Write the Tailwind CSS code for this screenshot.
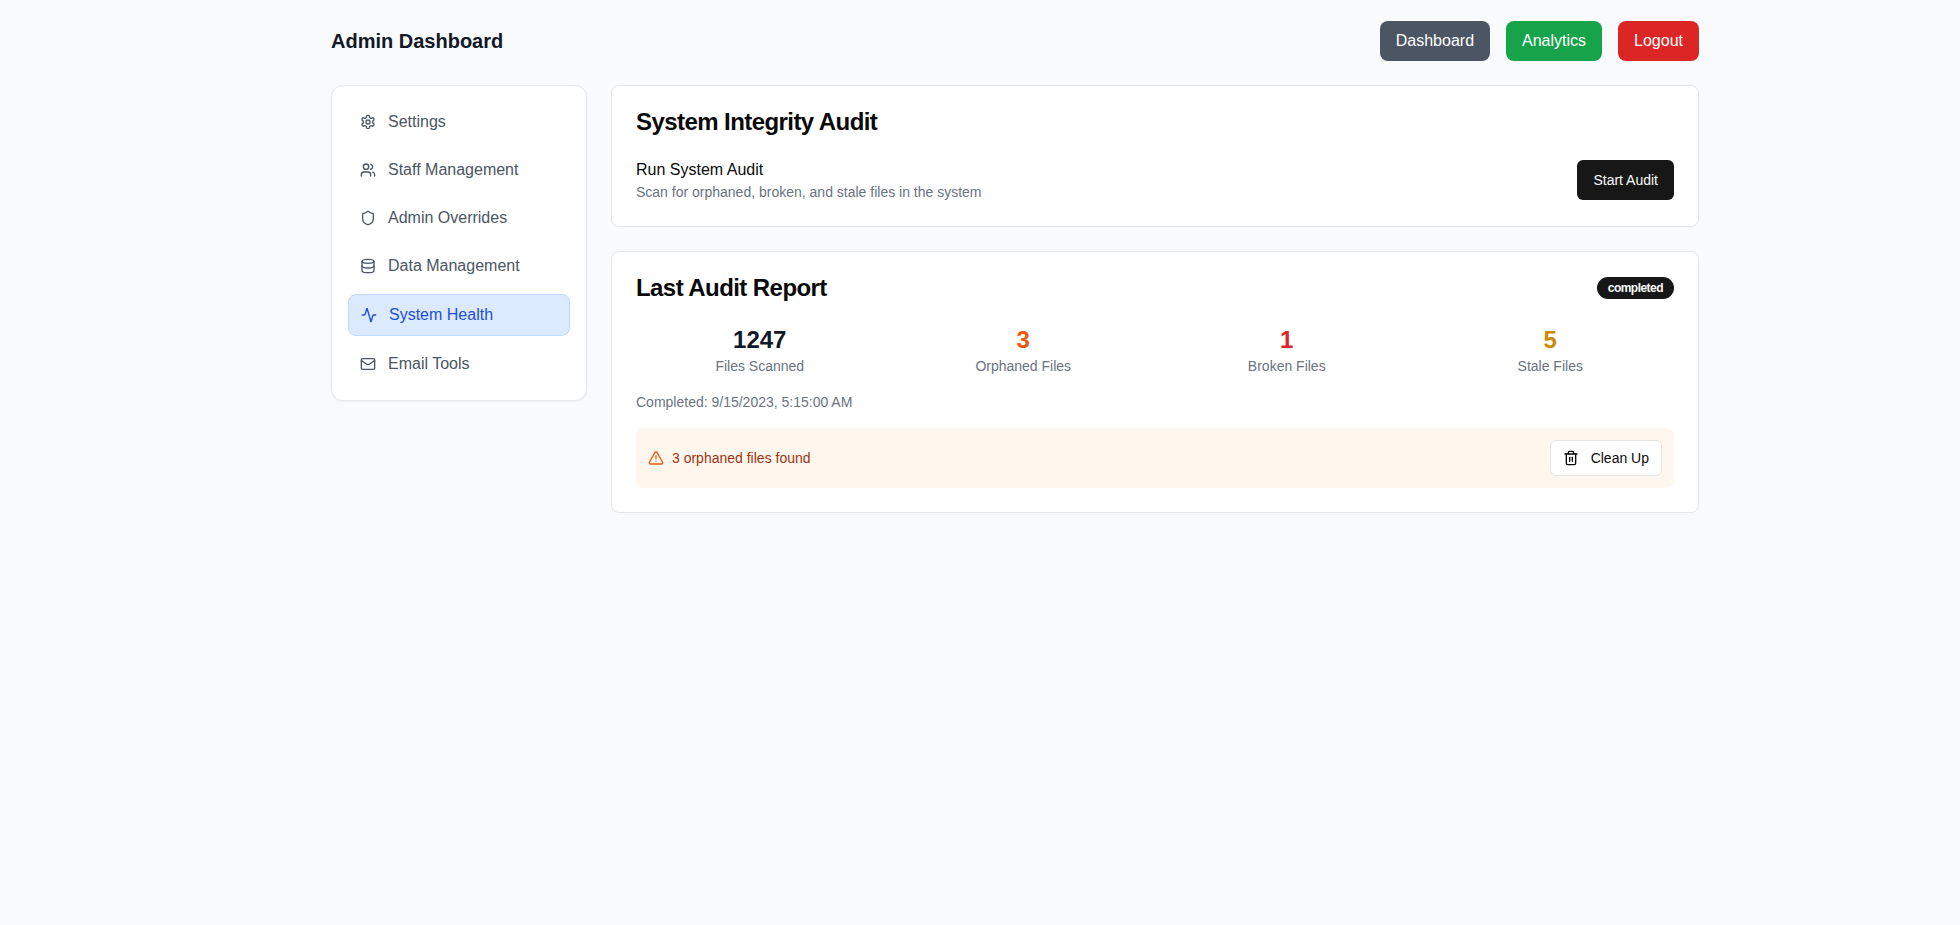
<!DOCTYPE html>
<html lang="en">
<head>
<meta charset="utf-8">
<title>Admin Dashboard</title>
<script src="https://cdn.jsdelivr.net/npm/@tailwindcss/browser@4"></script>
</head>
<body class="min-h-screen bg-[#f9fafb] font-['Liberation_Sans',Arial,sans-serif] text-[#0a0a0a]">
<div class="ml-[331px] w-[1368px] pt-[21px]">
  <header class="flex h-10 items-center justify-between">
    <h1 class="text-xl font-bold text-[#111827]">Admin Dashboard</h1>
    <nav class="flex gap-4 text-white">
      <button class="rounded-lg bg-[#4b5563] px-4 py-2">Dashboard</button>
      <button class="rounded-lg bg-[#16a34a] px-4 py-2">Analytics</button>
      <button class="rounded-lg bg-[#dc2626] px-4 py-2">Logout</button>
    </nav>
  </header>
  <div class="mt-6 flex items-start gap-6">
    <aside class="w-64 shrink-0 rounded-xl border border-[#e5e7eb] bg-white p-4 shadow-xs">
      <ul class="flex flex-col gap-2 text-[#4b5563]">
        <li class="flex items-center gap-3 rounded-lg px-3 py-2">
          <svg class="size-4" viewBox="0 0 24 24" fill="none" stroke="currentColor" stroke-width="2" stroke-linecap="round" stroke-linejoin="round"><path d="M12.22 2h-.44a2 2 0 0 0-2 2v.18a2 2 0 0 1-1 1.73l-.43.25a2 2 0 0 1-2 0l-.15-.08a2 2 0 0 0-2.73.73l-.22.38a2 2 0 0 0 .73 2.73l.15.1a2 2 0 0 1 1 1.72v.51a2 2 0 0 1-1 1.74l-.15.09a2 2 0 0 0-.73 2.73l.22.38a2 2 0 0 0 2.73.73l.15-.08a2 2 0 0 1 2 0l.43.25a2 2 0 0 1 1 1.73V20a2 2 0 0 0 2 2h.44a2 2 0 0 0 2-2v-.18a2 2 0 0 1 1-1.73l.43-.25a2 2 0 0 1 2 0l.15.08a2 2 0 0 0 2.73-.73l.22-.39a2 2 0 0 0-.73-2.73l-.15-.08a2 2 0 0 1-1-1.74v-.5a2 2 0 0 1 1-1.74l.15-.09a2 2 0 0 0 .73-2.73l-.22-.38a2 2 0 0 0-2.73-.73l-.15.08a2 2 0 0 1-2 0l-.43-.25a2 2 0 0 1-1-1.73V4a2 2 0 0 0-2-2z"/><circle cx="12" cy="12" r="3"/></svg>
          <span>Settings</span>
        </li>
        <li class="flex items-center gap-3 rounded-lg px-3 py-2">
          <svg class="size-4" viewBox="0 0 24 24" fill="none" stroke="currentColor" stroke-width="2" stroke-linecap="round" stroke-linejoin="round"><path d="M16 21v-2a4 4 0 0 0-4-4H6a4 4 0 0 0-4 4v2"/><circle cx="9" cy="7" r="4"/><path d="M22 21v-2a4 4 0 0 0-3-3.87"/><path d="M16 3.13a4 4 0 0 1 0 7.75"/></svg>
          <span>Staff Management</span>
        </li>
        <li class="flex items-center gap-3 rounded-lg px-3 py-2">
          <svg class="size-4" viewBox="0 0 24 24" fill="none" stroke="currentColor" stroke-width="2" stroke-linecap="round" stroke-linejoin="round"><path d="M20 13c0 5-3.5 7.5-7.66 8.95a1 1 0 0 1-.67-.01C7.5 20.5 4 18 4 13V6a1 1 0 0 1 1-1c2 0 4.5-1.2 6.24-2.72a1.17 1.17 0 0 1 1.52 0C14.51 3.81 17 5 19 5a1 1 0 0 1 1 1z"/></svg>
          <span>Admin Overrides</span>
        </li>
        <li class="flex items-center gap-3 rounded-lg px-3 py-2">
          <svg class="size-4" viewBox="0 0 24 24" fill="none" stroke="currentColor" stroke-width="2" stroke-linecap="round" stroke-linejoin="round"><ellipse cx="12" cy="5" rx="9" ry="3"/><path d="M3 5v14a9 3 0 0 0 18 0V5"/><path d="M3 12a9 3 0 0 0 18 0"/></svg>
          <span>Data Management</span>
        </li>
        <li class="flex items-center gap-3 rounded-lg border border-[#bfdbfe] bg-[#dbeafe] px-3 py-2 text-[#1d4ed8]">
          <svg class="size-4" viewBox="0 0 24 24" fill="none" stroke="currentColor" stroke-width="2" stroke-linecap="round" stroke-linejoin="round"><path d="M22 12h-2.48a2 2 0 0 0-1.93 1.46l-2.35 8.36a.25.25 0 0 1-.48 0L9.24 2.18a.25.25 0 0 0-.48 0l-2.35 8.36A2 2 0 0 1 4.49 12H2"/></svg>
          <span>System Health</span>
        </li>
        <li class="flex items-center gap-3 rounded-lg px-3 py-2">
          <svg class="size-4" viewBox="0 0 24 24" fill="none" stroke="currentColor" stroke-width="2" stroke-linecap="round" stroke-linejoin="round"><rect width="20" height="16" x="2" y="4" rx="2"/><path d="m22 7-8.97 5.7a1.94 1.94 0 0 1-2.06 0L2 7"/></svg>
          <span>Email Tools</span>
        </li>
      </ul>
    </aside>
    <main class="flex min-w-0 flex-1 flex-col gap-6">
      <section class="rounded-lg border border-[#e5e5e5] bg-white p-6">
        <h2 class="text-2xl leading-none font-semibold tracking-[-0.57px]">System Integrity Audit</h2>
        <div class="mt-6 flex items-center justify-between">
          <div>
            <p class="font-medium">Run System Audit</p>
            <p class="text-sm text-[#6b7280]">Scan for orphaned, broken, and stale files in the system</p>
          </div>
          <button class="h-10 rounded-md bg-[#171717] px-4 text-sm font-medium text-[#fafafa]">Start Audit</button>
        </div>
      </section>
      <section class="rounded-lg border border-[#e5e5e5] bg-white p-6">
        <div class="flex items-center justify-between">
          <h2 class="text-2xl leading-none font-semibold tracking-[-0.57px]">Last Audit Report</h2>
          <span class="-my-px rounded-full border border-transparent bg-[#171717] px-2.5 py-0.5 text-xs font-semibold tracking-[-0.53px] text-[#fafafa]">completed</span>
        </div>
        <div class="mt-6 grid grid-cols-4 gap-4 text-center">
          <div><p class="text-2xl font-bold text-[#111827]">1247</p><p class="text-sm text-[#6b7280]">Files Scanned</p></div>
          <div><p class="text-2xl font-bold text-[#ea580c]">3</p><p class="text-sm text-[#6b7280]">Orphaned Files</p></div>
          <div><p class="text-2xl font-bold text-[#dc2626]">1</p><p class="text-sm text-[#6b7280]">Broken Files</p></div>
          <div><p class="text-2xl font-bold text-[#ca8a04]">5</p><p class="text-sm text-[#6b7280]">Stale Files</p></div>
        </div>
        <p class="mt-4 text-sm text-[#6b7280]">Completed: 9/15/2023, 5:15:00 AM</p>
        <div class="mt-4 flex items-center justify-between rounded-lg bg-[#fff7ed] p-3">
          <div class="flex items-center gap-2">
            <svg class="size-4 text-[#ea580c]" viewBox="0 0 24 24" fill="none" stroke="currentColor" stroke-width="2" stroke-linecap="round" stroke-linejoin="round"><path d="m21.73 18-8-14a2 2 0 0 0-3.48 0l-8 14A2 2 0 0 0 4 21h16a2 2 0 0 0 1.73-3"/><path d="M12 9v4"/><path d="M12 17h.01"/></svg>
            <span class="text-sm text-[#9a3412]">3 orphaned files found</span>
          </div>
          <button class="flex h-9 items-center gap-2 rounded-md border border-[#e5e5e5] bg-white px-3 text-sm font-medium">
            <svg class="mr-1 size-4" viewBox="0 0 24 24" fill="none" stroke="currentColor" stroke-width="2" stroke-linecap="round" stroke-linejoin="round"><path d="M3 6h18"/><path d="M19 6v14c0 1-1 2-2 2H7c-1 0-2-1-2-2V6"/><path d="M8 6V4c0-1 1-2 2-2h4c1 0 2 1 2 2v2"/><path d="M10 11v6"/><path d="M14 11v6"/></svg>
            <span>Clean Up</span>
          </button>
        </div>
      </section>
    </main>
  </div>
</div>
</body>
</html>
